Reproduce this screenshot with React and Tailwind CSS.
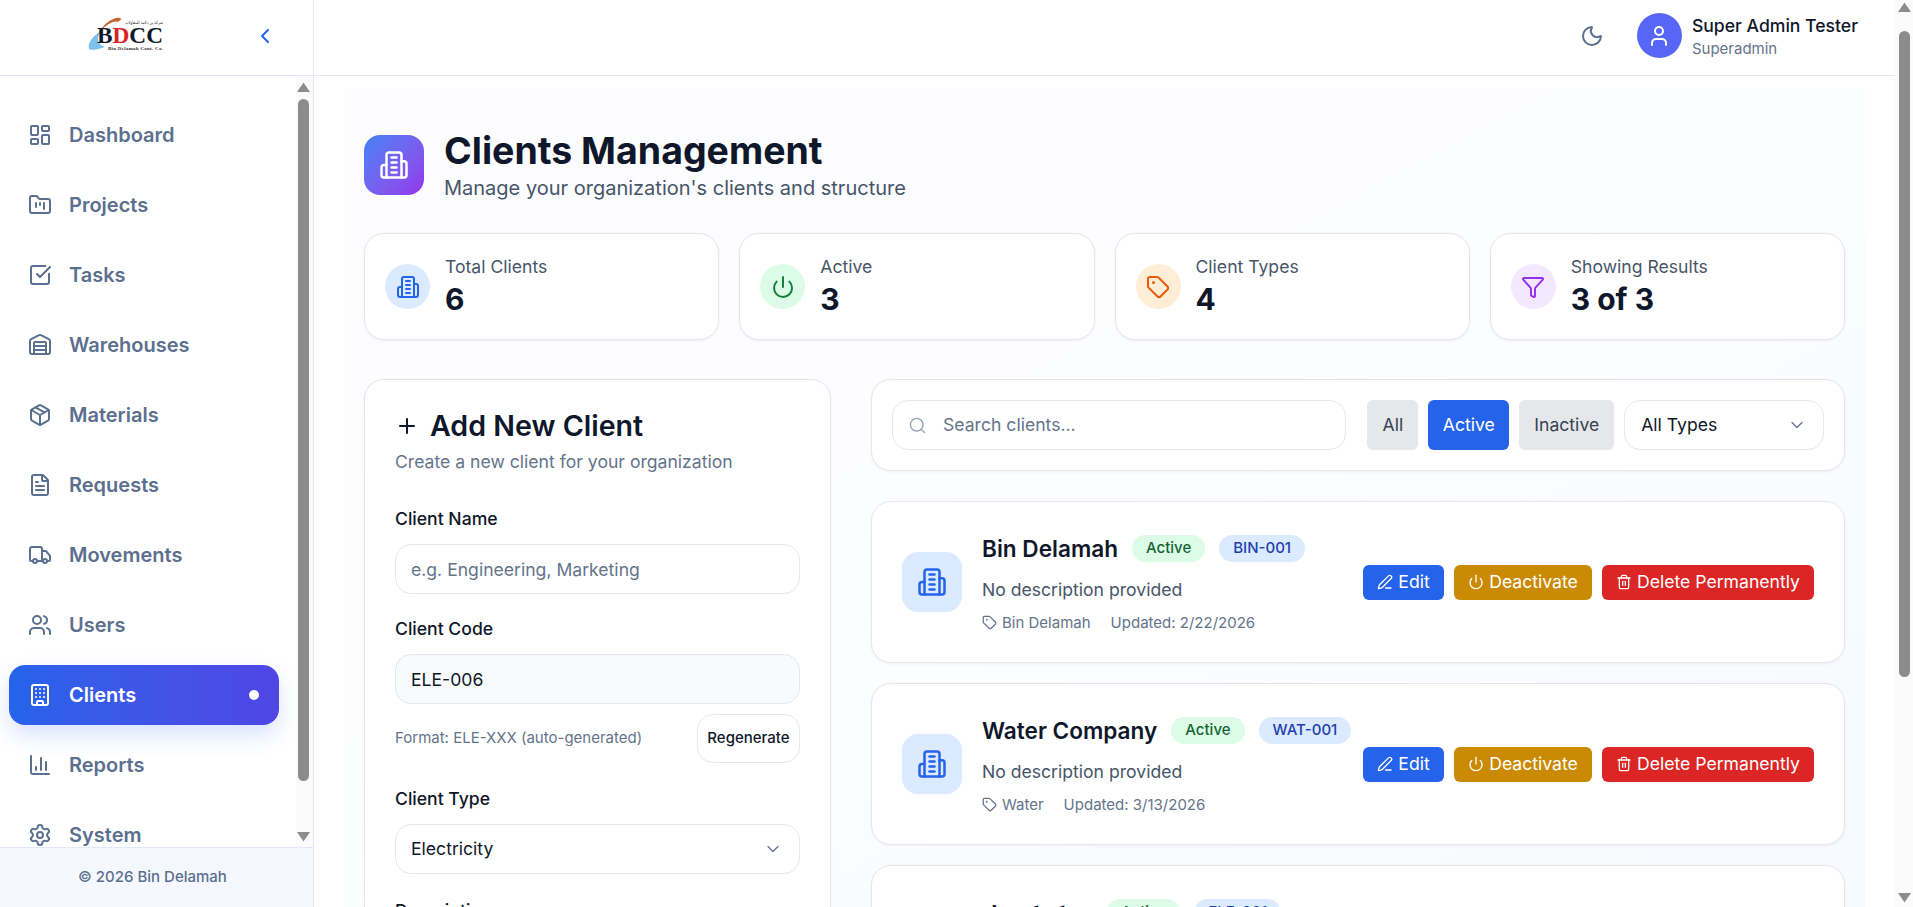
import React from 'react';
import {
	LayoutDashboard, FolderKanban, SquareCheckBig, Warehouse, Package, FileText, Truck, Users,
	Building, ChartColumn, Settings, ChevronLeft, ChevronDown, Moon, User, Power, Tag, Funnel,
	Plus, Search, PenLine, Trash2
} from 'lucide-react';

const navItems = [
	{ label: 'Dashboard', icon: LayoutDashboard },
	{ label: 'Projects', icon: FolderKanban },
	{ label: 'Tasks', icon: SquareCheckBig },
	{ label: 'Warehouses', icon: Warehouse },
	{ label: 'Materials', icon: Package },
	{ label: 'Requests', icon: FileText },
	{ label: 'Movements', icon: Truck },
	{ label: 'Users', icon: Users },
	{ label: 'Clients', icon: Building, active: true },
	{ label: 'Reports', icon: ChartColumn },
	{ label: 'System', icon: Settings },
];

const clients = [
	{ name: 'Bin Delamah', code: 'BIN-001', type: 'Bin Delamah', updated: '2/22/2026', nameSize: 'text-[22.6px]' },
	{ name: 'Water Company', code: 'WAT-001', type: 'Water', updated: '3/13/2026', nameSize: 'text-[22.6px]' },
	{ name: 'شركة كهرباء', code: 'ELE-001', type: 'Electricity', updated: '3/13/2026', nameSize: 'text-[18px]' },
];

// older lucide Building2, four floors and two wings
function Tower({ className }) {
	return (
		<svg viewBox="0 0 24 24" fill="none" stroke="currentColor" strokeWidth="2" strokeLinecap="round" strokeLinejoin="round" className={className}>
			<path d="M6 22V4a2 2 0 0 1 2-2h8a2 2 0 0 1 2 2v18Z" />
			<path d="M6 12H4a2 2 0 0 0-2 2v6a2 2 0 0 0 2 2h2" />
			<path d="M18 9h2a2 2 0 0 1 2 2v9a2 2 0 0 1-2 2h-2" />
			<path d="M10 6h4" />
			<path d="M10 10h4" />
			<path d="M10 14h4" />
			<path d="M10 18h4" />
		</svg>
	);
}

function Logo() {
	return (
		<svg viewBox="0 0 76 34" className="w-[76px] h-[34px] ml-[88px] mb-1">
			<path d="M1 32C-1 26 6 18 13 14C9 20 8 27 17 30C11 32 5 34 1 32Z" fill="#7cc0ee" />
			<path d="M12 14C18 5 26 0 32 1C35 2 31 4 30 5C25 3 19 8 12 14Z" fill="#c8622c" />
			<text x="37" y="7" fontSize="4.5" fill="#333" fontFamily="'DejaVu Sans', sans-serif" textLength="38" lengthAdjust="spacingAndGlyphs">شركة بن دلامة للمقاولات</text>
			<text x="9" y="26" fontSize="24" fontWeight="700" fill="#101828" fontFamily="'Liberation Serif', serif" textLength="66" lengthAdjust="spacingAndGlyphs">
				B<tspan fill="#d9252a">D</tspan>CC
			</text>
			<text x="20" y="33" fontSize="5" fontWeight="700" fill="#333" fontFamily="'Liberation Serif', serif" textLength="55">Bin Delamah Cont. Co.</text>
		</svg>
	);
}

function Arrow({ up }) {
	return (
		<svg viewBox="0 0 13 10" className="w-[13px] h-[10px] shrink-0 text-[#8c8c8c]" fill="currentColor">
			{up ? <path d="M6.5 0.5L13 10H0Z" /> : <path d="M0 0H13L6.5 9.5Z" />}
		</svg>
	);
}

function NavRow({ item }) {
	const Icon = item.icon;
	if (item.active) {
		return (
			<div className="h-[60px] shrink-0 flex items-center pl-[19px] pr-5 gap-[17px] rounded-2xl text-white bg-gradient-to-r from-[#2563eb] to-[#4f46e5] shadow-[0_10px_22px_rgba(37,99,235,0.18)]">
				<Icon className="w-6 h-6 shrink-0" strokeWidth={2} />
				<span className="text-[20px] font-semibold">{item.label}</span>
				<span className="ml-auto w-2.5 h-2.5 rounded-full bg-white" />
			</div>
		);
	}
	return (
		<div className="h-[60px] shrink-0 flex items-center pl-[19px] pr-5 gap-[17px] text-[#5b6f8e]">
			<Icon className="w-6 h-6 shrink-0" strokeWidth={2} />
			<span className="text-[20px] font-semibold">{item.label}</span>
		</div>
	);
}

function Sidebar() {
	return (
		<aside className="w-[314px] shrink-0 h-full flex flex-col border-r border-[#e2e8f5] bg-white">
			<div className="h-[76px] shrink-0 flex items-center pb-1 border-b border-[#e2e8f5]">
				<Logo />
				<ChevronLeft className="ml-auto mr-9 w-6 h-6 text-[#2563eb]" strokeWidth={2} />
			</div>
			<div className="flex-1 min-h-0 flex">
				<nav className="flex-1 min-w-0 overflow-hidden flex flex-col gap-2.5 pt-[29px] pl-[9px] pr-[17px]">
					{navItems.map(item => <NavRow key={item.label} item={item} />)}
				</nav>
				<div className="w-[17px] shrink-0 flex flex-col items-center bg-[#fbfbfb] pt-[6px] pb-[5px] pr-[2px]">
					<Arrow up />
					<div className="w-[11px] h-[682px] mt-[7px] rounded-full bg-[#8c8c8c]" />
					<div className="mt-auto"><Arrow /></div>
				</div>
			</div>
			<div className="h-[60px] shrink-0 flex items-center justify-center pr-2 border-t border-[#e2e8f5] bg-[#f5f8ff] text-[15px] font-medium text-[#5b6f8e]">
				© 2026 Bin Delamah
			</div>
		</aside>
	);
}

function Topbar() {
	return (
		<header className="h-[76px] shrink-0 flex items-center justify-end pr-[37px] pb-1 border-b border-[#e5e7ef] bg-white">
			<Moon className="w-6 h-6 text-[#5b6f8e]" strokeWidth={2} />
			<div className="ml-[33px] w-[45px] h-[45px] rounded-full bg-[#5766f6] text-white flex items-center justify-center">
				<User className="w-6 h-6" strokeWidth={2} />
			</div>
			<div className="ml-[10px] flex flex-col">
				<span className="text-[17.6px] leading-[26px] font-medium text-[#0f172a]">Super Admin Tester</span>
				<span className="text-[15px] leading-[19px] text-[#64748b]">Superadmin</span>
			</div>
		</header>
	);
}

function StatCard({ icon, tint, label, value }) {
	return (
		<div className="h-[107px] flex items-center gap-[15px] px-5 rounded-[20px] border border-[#e5e7eb] bg-white shadow-[0_1px_3px_rgba(15,23,42,0.05)]">
			<div className={"w-[45px] h-[45px] shrink-0 rounded-full flex items-center justify-center " + tint}>
				{icon}
			</div>
			<div className="flex flex-col">
				<span className="text-[17.6px] leading-[24px] text-[#475569]">{label}</span>
				<span className="text-[30px] leading-[40px] font-bold text-[#0f172a]">{value}</span>
			</div>
		</div>
	);
}

function Field({ label, children }) {
	return (
		<div className="flex flex-col">
			<label className="text-[17.6px] leading-[24px] font-medium text-[#0f172a] mb-[13px]">{label}</label>
			{children}
		</div>
	);
}

function AddClientForm() {
	return (
		<section className="rounded-[20px] border border-[#e5e7eb] bg-white px-[30px] pt-[31px] pb-[30px] shadow-[0_1px_3px_rgba(15,23,42,0.05)]">
			<h2 className="flex items-center gap-[11px] text-[28.6px] leading-[30px] font-semibold text-[#0f172a]">
				<Plus className="w-6 h-6" strokeWidth={2} />
				Add New Client
			</h2>
			<p className="mt-[9px] text-[17.6px] leading-[24px] text-[#64748b]">Create a new client for your organization</p>
			<div className="mt-[33px] flex flex-col">
				<Field label="Client Name">
					<input
						className="h-[50px] rounded-2xl border border-[#e2e8f0] bg-white px-[15px] text-[17.6px] outline-none placeholder:text-[#64748b]"
						placeholder="e.g. Engineering, Marketing"
					/>
				</Field>
				<div className="mt-[23px]">
					<Field label="Client Code">
						<input
							className="h-[50px] rounded-2xl border border-[#e2e8f0] bg-[#f8fafc] px-[15px] text-[17.6px] text-[#0f172a] outline-none"
							defaultValue="ELE-006"
							readOnly
						/>
					</Field>
				</div>
				<div className="mt-[10px] flex items-center justify-between">
					<span className="text-[15px] text-[#64748b]">Format: ELE-XXX (auto-generated)</span>
					<button className="h-[49px] w-[103px] rounded-2xl border border-[#e2e8f0] bg-white text-[15px] font-medium text-[#0f172a]">Regenerate</button>
				</div>
				<div className="mt-[24px]">
					<Field label="Client Type">
						<div className="h-[50px] rounded-2xl border border-[#e2e8f0] bg-white pl-[15px] pr-[16px] flex items-center justify-between text-[17.6px] text-[#0f172a]">
							Electricity
							<ChevronDown className="w-5 h-5 text-[#64748b]" strokeWidth={1.5} />
						</div>
					</Field>
				</div>
				<div className="mt-[25px]">
					<Field label="Description">
						<div className="h-[100px]" />
					</Field>
				</div>
			</div>
		</section>
	);
}

function Toolbar() {
	return (
		<div className="h-[92px] flex items-center gap-2.5 px-5 rounded-[20px] border border-[#e5e7eb] bg-white shadow-[0_1px_3px_rgba(15,23,42,0.05)]">
			<div className="w-[455px] h-[50px] flex items-center gap-[16px] pl-[15px] rounded-2xl border border-[#e2e8f0] bg-white text-[17.6px] text-[#64748b]">
				<Search className="w-[19px] h-[19px] text-[#94a3b8]" strokeWidth={1.75} />
				Search clients...
			</div>
			<button className="ml-[11px] w-[51px] h-[50px] rounded-md bg-[#e5e7eb] text-[17.6px] text-[#374151]">All</button>
			<button className="w-[81px] h-[50px] rounded-md bg-[#2563eb] text-[17.6px] text-white">Active</button>
			<button className="w-[95px] h-[50px] rounded-md bg-[#e5e7eb] text-[17.6px] text-[#374151]">Inactive</button>
			<div className="w-[200px] h-[50px] flex items-center justify-between pl-4 pr-[16px] rounded-2xl border border-[#e2e8f0] bg-white text-[17.6px] text-[#0f172a]">
				All Types
				<ChevronDown className="w-5 h-5 text-[#64748b]" strokeWidth={1.5} />
			</div>
		</div>
	);
}

function ClientCard({ client }) {
	return (
		<article className="h-[162px] shrink-0 flex items-center px-[30px] rounded-[20px] border border-[#e5e7eb] bg-white shadow-[0_1px_3px_rgba(15,23,42,0.05)]">
			<div className="w-[60px] h-[60px] shrink-0 rounded-2xl bg-[#dbeafe] text-[#2563eb] flex items-center justify-center">
				<Tower className="w-[30px] h-[30px]" />
			</div>
			<div className="ml-5 flex-1 min-w-0 flex flex-col">
				<div className="flex items-center gap-[14px]">
					<span className={"leading-[34px] font-semibold text-[#0f172a] font-['Inter','DejaVu_Sans',sans-serif] " + client.nameSize}>{client.name}</span>
					<span className="h-[27px] px-[14px] flex items-center rounded-full bg-[#dcfce7] text-[15px] font-medium text-[#166534]">Active</span>
					<span className="h-[27px] px-[14px] flex items-center rounded-full bg-[#dbeafe] text-[15px] font-medium text-[#1e40af]">{client.code}</span>
				</div>
				<p className="mt-3 text-[17.6px] leading-[24px] text-[#475569]">{client.description || 'No description provided'}</p>
				<div className="mt-[11px] flex items-center gap-5 text-[15px] leading-[20px] text-[#64748b]">
					<span className="flex items-center gap-[5px]"><Tag className="w-[15px] h-[15px]" />{client.type}</span>
					<span>Updated: {client.updated}</span>
				</div>
			</div>
			<div className="flex items-center gap-2.5 shrink-0">
				<button className="w-[81px] h-[35px] rounded-md bg-[#2563eb] text-white text-[17.6px] flex items-center justify-center gap-[5px]">
					<PenLine className="w-4 h-4" />Edit
				</button>
				<button className="w-[138px] h-[35px] rounded-md bg-[#ca8a04] text-white text-[17.6px] flex items-center justify-center gap-[5px]">
					<Power className="w-4 h-4" />Deactivate
				</button>
				<button className="w-[212px] h-[35px] rounded-md bg-[#dc2626] text-white text-[17.6px] flex items-center justify-center gap-[5px]">
					<Trash2 className="w-4 h-4" />Delete Permanently
				</button>
			</div>
		</article>
	);
}

export default function App() {
	return (
		<div className="h-screen overflow-hidden flex bg-white font-['Inter',sans-serif]">
			<Sidebar />
			<div className="flex-1 min-w-0 flex flex-col overflow-hidden">
				<Topbar />
				<main className="ml-[30px] mr-[30px] mt-3 px-5 pt-10 bg-gradient-to-br from-[#fcfcfe] via-[#fcfdff] to-[#f7f9fe] flex-1 min-h-0 overflow-hidden">
					<div className="flex items-center gap-5">
						<div className="w-[60px] h-[60px] rounded-2xl bg-gradient-to-br from-[#3b82f6] to-[#9333ea] text-white flex items-center justify-center">
							<Tower className="w-[30px] h-[30px]" />
						</div>
						<div className="flex flex-col">
							<h1 className="text-[37.5px] leading-[46px] font-bold text-[#0f172a]">Clients Management</h1>
							<p className="text-[20px] leading-[28px] text-[#475569]">Manage your organization's clients and structure</p>
						</div>
					</div>

					<div className="mt-[31px] grid grid-cols-4 gap-5">
						<StatCard tint="bg-[#dbeafe] text-[#2563eb]" icon={<Tower className="w-6 h-6" />} label="Total Clients" value="6" />
						<StatCard tint="bg-[#dcfce7] text-[#15803d]" icon={<Power className="w-6 h-6" />} label="Active" value="3" />
						<StatCard tint="bg-[#ffedd5] text-[#ea580c]" icon={<Tag className="w-6 h-6" />} label="Client Types" value="4" />
						<StatCard tint="bg-[#f3e8ff] text-[#9333ea]" icon={<Funnel className="w-6 h-6" />} label="Showing Results" value="3 of 3" />
					</div>

					<div className="mt-[39px] grid grid-cols-3 gap-10 items-start">
						<AddClientForm />
						<div className="col-span-2 flex flex-col">
							<Toolbar />
							<div className="mt-[30px] flex flex-col gap-5">
								{clients.map(c => <ClientCard key={c.code} client={c} />)}
							</div>
						</div>
					</div>
				</main>
			</div>
			<div className="w-[18px] shrink-0 h-full flex flex-col items-center bg-[#fbfbfb] pt-[2px] pb-[4px]">
				<Arrow up />
				<div className="w-[11px] h-[646px] mt-[19px] rounded-full bg-[#8c8c8c]" />
				<div className="mt-auto"><Arrow /></div>
			</div>
		</div>
	);
}
